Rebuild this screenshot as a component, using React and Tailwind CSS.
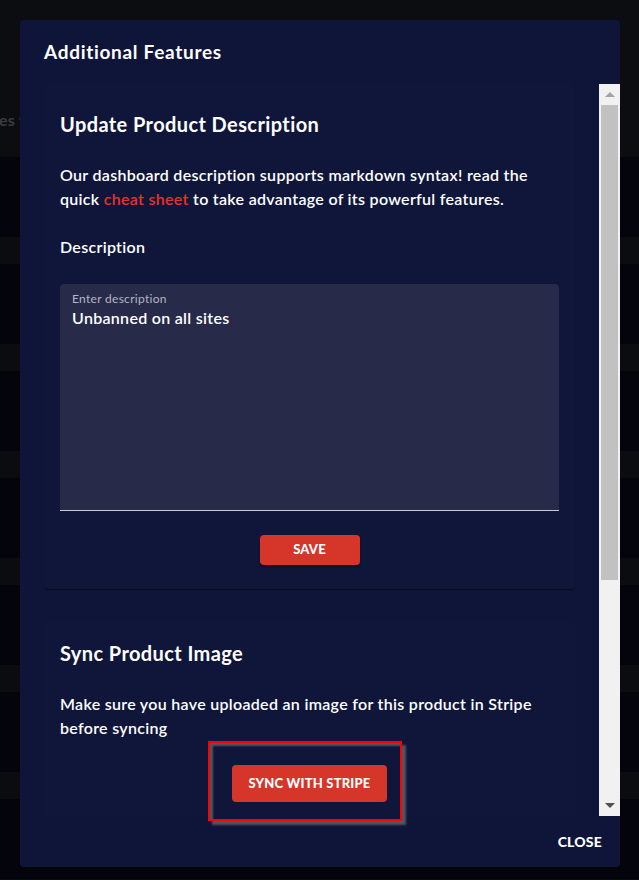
import React from "react";

function BgRows() {
  const rows = [];
  for (let i = 0; i < 7; i++) {
    rows.push(
      <div key={"d" + i} className="h-[80px] bg-[#04050c]" />,
      <div key={"l" + i} className="h-[27px] bg-[#0b0c10]" />
    );
  }
  return (
    <div className="flex flex-col">
      <div className="h-[157px] bg-[#0c0d11] pt-[108px]">
        <span className="text-[16px] font-bold text-[#3b3c42] -ml-[1px] tracking-[0.3px]">es v</span>
      </div>
      {rows}
    </div>
  );
}

function Scrollbar() {
  return (
    <div className="w-[21px] h-full bg-[#f1f1f1] flex flex-col items-center">
      <div className="h-[21px] w-full flex items-center justify-center">
        <div className="w-0 h-0 border-l-[5px] border-r-[5px] border-b-[5px] border-l-transparent border-r-transparent border-b-[#a3a3a3]" />
      </div>
      <div className="w-[17px] h-[475px] bg-[#c1c1c1]" />
      <div className="flex-1" />
      <div className="h-[21px] w-full flex items-center justify-center">
        <div className="w-0 h-0 border-l-[5px] border-r-[5px] border-t-[5px] border-l-transparent border-r-transparent border-t-[#505050]" />
      </div>
    </div>
  );
}

export default function App() {
  return (
    <div
      className="relative w-[639px] h-[880px] overflow-hidden bg-[#04050c] text-white"
      style={{ fontFamily: "Lato, 'Noto Sans', sans-serif" }}
    >
      <BgRows />
      <div className="absolute left-[20px] top-[20px] w-[600px] h-[847px] bg-[#0f1538] rounded-[4px] flex flex-col">
        <div className="pl-[24px] pt-[20px] h-[64px]">
          <h2 className="text-[19px] leading-[24px] font-bold tracking-[0.7px]">Additional Features</h2>
        </div>
        <div className="flex h-[732px] pl-[24px] overflow-hidden">
          <div className="flex-1 pr-[24px] flex flex-col">
            <div className="bg-[#10163a] rounded-[4px] shadow-[0_1px_1px_rgba(0,0,0,0.45)] px-[16px] pt-[24px] pb-[24px] flex flex-col">
              <h3 className="text-[20px] leading-[32px] font-bold tracking-[0.4px]">Update Product Description</h3>
              <p className="mt-[23px] text-[16px] leading-[24px] font-semibold tracking-[0.3px]">
                Our dashboard description supports markdown syntax! read the quick{" "}
                <span className="text-[#e0352b]">cheat sheet</span> to take advantage of its powerful features.
              </p>
              <div className="mt-[24px] text-[16px] leading-[24px] font-semibold tracking-[0.3px]">Description</div>
              <div className="mt-[25px] h-[227px] bg-[#282a4a] rounded-t-[4px] border-b border-[#c9c9d1] px-[12px] pt-[8px]">
                <div className="text-[12px] leading-[14px] text-[#b4b6c6] tracking-[0.3px]">Enter description</div>
                <div className="text-[16px] leading-[20px] font-semibold mt-[2px] tracking-[0.3px]">Unbanned on all sites</div>
              </div>
              <div className="mt-[24px] flex justify-center">
                <button className="w-[100px] h-[30px] bg-[#d6352a] rounded-[4px] text-[13px] font-black tracking-[0.2px] shadow-[0_2px_2px_rgba(0,0,0,0.35)]">
                  SAVE
                </button>
              </div>
            </div>
            <div className="mt-[16px] h-px bg-[#2b3052]" />
            <div className="mt-[16px] bg-[#10163a] rounded-[4px] px-[16px] pt-[16px] pb-[24px] flex flex-col">
              <h3 className="text-[20px] leading-[32px] font-bold tracking-[0.4px]">Sync Product Image</h3>
              <p className="mt-[23px] text-[16px] leading-[24px] font-semibold tracking-[0.3px]">
                Make sure you have uploaded an image for this product in Stripe before syncing
              </p>
              <div className="mt-[25px] flex justify-center">
                <button className="w-[155px] h-[37px] bg-[#d6352a] rounded-[4px] text-[13px] font-black tracking-[0.2px]">
                  SYNC WITH STRIPE
                </button>
              </div>
            </div>
          </div>
          <Scrollbar />
        </div>
        <div className="flex-1 flex items-center justify-end pr-[18px]">
          <span className="text-[14px] font-black tracking-[0.2px]">CLOSE</span>
        </div>
        <div className="absolute left-[188px] top-[721px] w-[194px] h-[80px] border-2 border-[#ff0000] shadow-[4px_4px_2px_rgba(85,87,100,0.95),inset_3px_3px_2px_rgba(85,87,100,0.95)]" />
      </div>
    </div>
  );
}
